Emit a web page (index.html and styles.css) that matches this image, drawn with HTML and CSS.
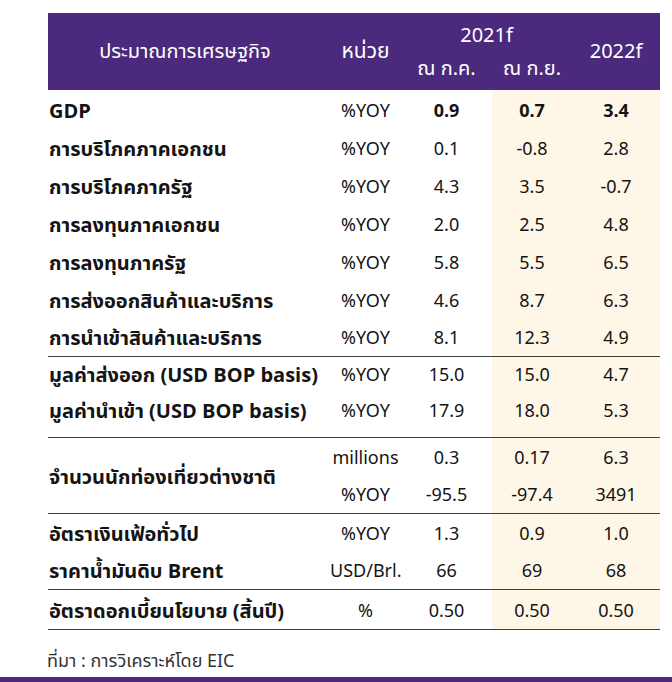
FILE: index.html
```html
<!DOCTYPE html>
<html lang="th">
<head>
<meta charset="utf-8">
<link rel="stylesheet" href="styles.css">
</head>
<body>
<div class="page">
  <table class="fc">
    <colgroup>
      <col class="c-label"><col class="c-unit"><col class="c-a"><col class="c-b"><col class="c-c">
    </colgroup>
    <thead>
      <tr class="h1">
        <th rowspan="2" class="hl">ประมาณการเศรษฐกิจ</th>
        <th rowspan="2" class="hu">หน่วย</th>
        <th colspan="2" class="hy">2021f</th>
        <th rowspan="2">2022f</th>
      </tr>
      <tr class="h2">
        <th class="hs">ณ ก.ค.</th>
        <th class="hs">ณ ก.ย.</th>
      </tr>
    </thead>
    <tbody>
      <tr class="bold"><td class="lb">GDP</td><td class="u">%YOY</td><td>0.9</td><td class="cr">0.7</td><td class="cr">3.4</td></tr>
      <tr><td class="lb">การบริโภคภาคเอกชน</td><td class="u">%YOY</td><td>0.1</td><td class="cr">-0.8</td><td class="cr">2.8</td></tr>
      <tr><td class="lb">การบริโภคภาครัฐ</td><td class="u">%YOY</td><td>4.3</td><td class="cr">3.5</td><td class="cr">-0.7</td></tr>
      <tr><td class="lb">การลงทุนภาคเอกชน</td><td class="u">%YOY</td><td>2.0</td><td class="cr">2.5</td><td class="cr">4.8</td></tr>
      <tr><td class="lb">การลงทุนภาครัฐ</td><td class="u">%YOY</td><td>5.8</td><td class="cr">5.5</td><td class="cr">6.5</td></tr>
      <tr><td class="lb">การส่งออกสินค้าและบริการ</td><td class="u">%YOY</td><td>4.6</td><td class="cr">8.7</td><td class="cr">6.3</td></tr>
      <tr><td class="lb">การนำเข้าสินค้าและบริการ</td><td class="u">%YOY</td><td>8.1</td><td class="cr">12.3</td><td class="cr">4.9</td></tr>
      <tr class="sep g2a"><td class="lb">มูลค่าส่งออก (USD BOP basis)</td><td class="u">%YOY</td><td>15.0</td><td class="cr">15.0</td><td class="cr">4.7</td></tr>
      <tr class="g2b"><td class="lb">มูลค่านำเข้า (USD BOP basis)</td><td class="u">%YOY</td><td>17.9</td><td class="cr">18.0</td><td class="cr">5.3</td></tr>
      <tr class="sep"><td class="lb" rowspan="2">จำนวนนักท่องเที่ยวต่างชาติ</td><td class="u">millions</td><td>0.3</td><td class="cr">0.17</td><td class="cr">6.3</td></tr>
      <tr><td class="u">%YOY</td><td>-95.5</td><td class="cr">-97.4</td><td class="cr">3491</td></tr>
      <tr class="sep"><td class="lb">อัตราเงินเฟ้อทั่วไป</td><td class="u">%YOY</td><td>1.3</td><td class="cr">0.9</td><td class="cr">1.0</td></tr>
      <tr><td class="lb">ราคาน้ำมันดิบ Brent</td><td class="u">USD/Brl.</td><td>66</td><td class="cr">69</td><td class="cr">68</td></tr>
      <tr class="sep last"><td class="lb">อัตราดอกเบี้ยนโยบาย (สิ้นปี)</td><td class="u">%</td><td>0.50</td><td class="cr">0.50</td><td class="cr">0.50</td></tr>
    </tbody>
  </table>
  <p class="src">ที่มา : การวิเคราะห์โดย EIC</p>
</div>
<div class="bar"></div>
</body>
</html>
```

FILE: styles.css
```css
html, body {
  margin: 0;
  padding: 0;
  background: #ffffff;
}
body {
  width: 672px;
  height: 682px;
  position: relative;
  overflow: hidden;
  font-family: "Noto Sans Thai", "Tahoma", "Loma", "Garuda", "Noto Sans", "DejaVu Sans", sans-serif;
  color: #141414;
}
.page {
  padding: 13px 0 0 48px;
}
.fc {
  width: 612px;
  border-collapse: collapse;
  border-spacing: 0;
  table-layout: fixed;
  font-size: 18px;
  line-height: 16px;
}
.c-label { width: 282px; }
.c-unit { width: 71px; }
.c-a { width: 91px; }
.c-b { width: 80px; }
.c-c { width: 88px; }
.fc th {
  background: #4b2a7d;
  color: #ffffff;
  font-weight: normal;
  font-size: 20px;
  padding: 0;
  height: 38.5px;
  box-sizing: border-box;
  text-align: center;
  vertical-align: middle;
}
.fc th.hy { vertical-align: bottom; padding-bottom: 8px; }
.fc th.hs { vertical-align: top; padding-top: 9px; }
.fc th.hl { padding-right: 8px; }
.fc th.hu { font-size: 21px; }
.fc td {
  padding: 5px 0 0;
  height: 38px;
  box-sizing: border-box;
  text-align: center;
  vertical-align: middle;
  white-space: nowrap;
}
.fc td.lb {
  text-align: left;
  font-weight: bold;
  font-size: 20px;
  padding-left: 1px;
}
.fc td.cr { background: #fef6e6; }
.fc tr.bold td { font-weight: bold; }
.fc tr.bold td.u { font-weight: normal; }
.fc tr.sep td { border-top: 1.5px solid #404040; }
.fc tr.last td { border-bottom: 1.5px solid #404040; height: 40px; }
.fc tr.g2a td { height: 37px; padding-top: 3px; }
.fc tr.g2b td { height: 44px; padding-top: 0; padding-bottom: 6px; }
.src {
  margin: 21px 0 0 -1px;
  font-size: 18px;
  line-height: 22px;
  color: #333333;
}
.bar {
  position: absolute;
  left: 0;
  right: 0;
  bottom: 0;
  height: 5px;
  background: #4b2a7d;
}
```
